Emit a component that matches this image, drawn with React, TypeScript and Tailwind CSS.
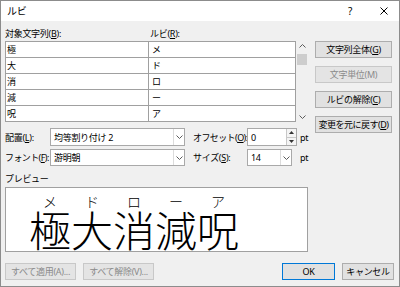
import React from 'react';

const rows = [
  { base: '極', ruby: 'メ' },
  { base: '大', ruby: 'ド' },
  { base: '消', ruby: 'ロ' },
  { base: '減', ruby: 'ー' },
  { base: '呪', ruby: 'ア' },
];

// access key in parentheses, e.g. (B)
const Key = ({ k, off }: { k: string; off?: boolean }) => (
  <span>
    (<span className={off ? '' : 'underline underline-offset-1'}>{k}</span>)
  </span>
);

const Chevron = ({ up }: { up?: boolean }) => (
  <svg width="7" height="4" viewBox="0 0 7 4" className="block">
    <path
      d={up ? 'M0.5 3.5 L3.5 0.5 L6.5 3.5' : 'M0.5 0.5 L3.5 3.5 L6.5 0.5'}
      fill="none"
      stroke="#5c5c5c"
      strokeWidth="1"
    />
  </svg>
);

const Btn = ({
  children,
  disabled,
  primary,
  className = '',
}: {
  children: React.ReactNode;
  disabled?: boolean;
  primary?: boolean;
  className?: string;
}) => (
  <div
    className={
      'h-[17px] flex items-center justify-center border leading-none whitespace-nowrap ' +
      (disabled
        ? 'bg-[#e4e4e4] border-[#c8c8c8] text-[#8a8a8a] '
        : primary
        ? 'bg-[#e1e1e1] border-[#0078d7] text-black '
        : 'bg-[#e1e1e1] border-[#adadad] text-black ') +
      className
    }
  >
    {children}
  </div>
);

const Select = ({ value, className = '' }: { value: string; className?: string }) => (
  <div className={'h-full bg-white border border-[#a9a9a9] flex items-center shrink-0 ' + className}>
    <span className="flex-1 pl-[3px] leading-none whitespace-nowrap">{value}</span>
    <div className="w-[11px] h-full border-l border-[#dcdcdc] flex items-center justify-center">
      <Chevron />
    </div>
  </div>
);

export default function App() {
  return (
    <div className="w-[400px] h-[287px] border border-[#8c8c8c] bg-[#f0f0f0] flex flex-col overflow-hidden text-[9px] tracking-[-0.3px] text-black font-[family-name:'Noto_Sans','Noto_Sans_CJK_JP',sans-serif]">
      {/* title bar */}
      <div className="h-[20px] bg-white flex items-center pl-[6px] pr-[11px] shrink-0">
        <span className="text-[10px] leading-none">ルビ</span>
        <span className="ml-auto text-[10px] leading-none">?</span>
        <svg width="8" height="8" viewBox="0 0 8 8" className="ml-[28px]">
          <path d="M0.5 0.5 L7.5 7.5 M7.5 0.5 L0.5 7.5" stroke="#000" strokeWidth="1" />
        </svg>
      </div>

      <div className="flex pl-[4px] shrink-0">
        {/* left column */}
        <div className="w-[304px] flex flex-col">
          <div className="mt-[5px] h-[15px] flex items-center leading-none whitespace-nowrap">
            <span className="w-[145px]">
              対象文字列<Key k="B" />:
            </span>
            <span>
              ルビ<Key k="R" />:
            </span>
          </div>

          <div className="flex h-[81px]">
            <div className="w-[291px] bg-white border-t border-l border-r border-[#a0a0a0] flex flex-col">
              {rows.map((r) => (
                <div key={r.base} className="h-[16px] flex border-b border-[#a0a0a0] leading-none">
                  <div className="w-[143px] border-r border-[#a0a0a0] pl-[1px] flex items-center">{r.base}</div>
                  <div className="flex-1 pl-[3px] flex items-center">{r.ruby}</div>
                </div>
              ))}
            </div>
            <div className="w-[12px] flex flex-col items-center">
              <div className="mt-[3px]">
                <Chevron up />
              </div>
              <div className="mt-[6px] w-[10px] h-[11px] bg-[#cdcdcd]" />
              <div className="mt-auto mb-[3px]">
                <Chevron />
              </div>
            </div>
          </div>

          {/* alignment / offset */}
          <div className="mt-[6px] h-[18px] flex items-center leading-none whitespace-nowrap">
            <span className="w-[45px] shrink-0">
              配置<Key k="L" />:
            </span>
            <Select value="均等割り付け 2" className="w-[135px]" />
            <span className="ml-[8px] w-[54px] shrink-0 tracking-[-0.6px]">
              オフセット<Key k="O" />:
            </span>
            <div className="w-[50px] h-full bg-white border border-[#a9a9a9] flex shrink-0">
              <span className="flex-1 pl-[3px] flex items-center">0</span>
              <div className="w-[10px] flex flex-col border-l border-[#c8c8c8]">
                <div className="flex-1 flex items-center justify-center border-b border-[#c8c8c8] bg-[#f4f4f4]">
                  <svg width="5" height="3" viewBox="0 0 5 3"><path d="M0 3 L2.5 0 L5 3 Z" fill="#333" /></svg>
                </div>
                <div className="flex-1 flex items-center justify-center bg-[#f4f4f4]">
                  <svg width="5" height="3" viewBox="0 0 5 3"><path d="M0 0 L2.5 3 L5 0 Z" fill="#333" /></svg>
                </div>
              </div>
            </div>
            <span className="ml-[3px]">pt</span>
          </div>

          {/* font / size */}
          <div className="mt-[3px] h-[17px] flex items-center leading-none whitespace-nowrap">
            <span className="w-[45px] shrink-0 tracking-[-0.6px]">
              フォント<Key k="F" />:
            </span>
            <Select value="游明朝" className="w-[135px]" />
            <span className="ml-[8px] w-[54px] shrink-0">
              サイズ<Key k="S" />:
            </span>
            <Select value="14" className="w-[45px]" />
            <span className="ml-[8px]">pt</span>
          </div>

          <div className="mt-[4px] h-[16px] flex items-center leading-none">プレビュー</div>

          {/* preview */}
          <div className="mt-[1px] h-[65px] w-[303px] bg-white border border-[#a0a0a0] overflow-hidden pl-[23px] pt-[6px] flex tracking-normal font-light">
            {rows.map((r) => (
              <div key={r.base} className="w-[42px] flex flex-col items-center shrink-0">
                <span className="text-[14px] leading-[16px]">{r.ruby}</span>
                <span className="text-[42px] leading-none">{r.base}</span>
              </div>
            ))}
          </div>
        </div>

        {/* right buttons */}
        <div className="ml-[6px] mt-[20px] w-[77px] flex flex-col gap-[8px]">
          <Btn>
            文字列全体<Key k="G" />
          </Btn>
          <Btn disabled>
            文字単位<Key k="M" off />
          </Btn>
          <Btn>
            ルビの解除<Key k="C" />
          </Btn>
          <Btn className="tracking-[-0.5px]">
            変更を元に戻す<Key k="D" />
          </Btn>
        </div>
      </div>

      {/* bottom buttons */}
      <div className="mt-[11px] flex pl-[4px] pr-[5px]">
        <Btn disabled className="w-[71px]">すべて適用(A)...</Btn>
        <Btn disabled className="w-[71px] ml-[7px]">すべて解除(V)...</Btn>
        <Btn primary className="w-[53px] ml-auto">OK</Btn>
        <Btn className="w-[52px] ml-[7px]">キャンセル</Btn>
      </div>
    </div>
  );
}
